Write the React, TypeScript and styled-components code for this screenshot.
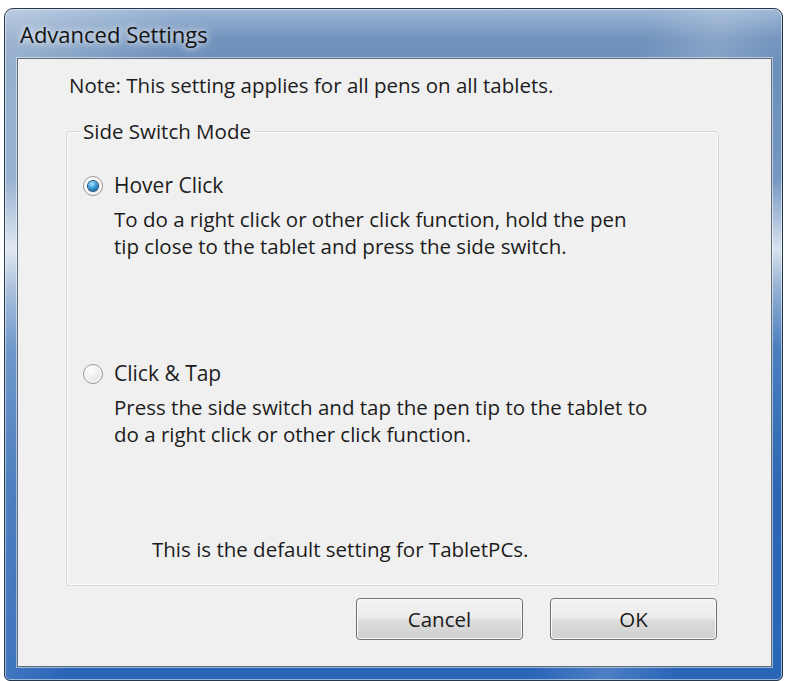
import React from "react";
import styled, { createGlobalStyle } from "styled-components";

const GlobalStyle = createGlobalStyle`
  html, body {
    margin: 0;
    padding: 0;
    background: #ffffff;
  }
  body {
    font-family: "Open Sans", "Noto Sans", sans-serif;
    color: #1c1c1c;
  }
`;

const Page = styled.div`
  width: 787px;
  height: 681px;
  padding: 8px 4px 0 4px;
  box-sizing: border-box;
  overflow: hidden;
`;

const Window = styled.div`
  display: flex;
  flex-direction: column;
  width: 779px;
  height: 673px;
  box-sizing: border-box;
  border: 1px solid #24364c;
  border-radius: 9px 9px 6px 6px;
  box-shadow: inset 0 0 0 1px rgba(255, 255, 255, 0.5);
  background:
    linear-gradient(100deg, rgba(255, 255, 255, 0.32) 0%, rgba(255, 255, 255, 0) 20%,
      rgba(255, 255, 255, 0) 72%, rgba(255, 255, 255, 0.16) 80%, rgba(255, 255, 255, 0) 88%),
    linear-gradient(180deg, #9cb6d5 0px, #7293bd 30px, #6a8fba 60px, #7597c1 170px,
      #d8e2ee 240px, #93b0d2 280px, #4a7ebe 340px, #2c66b2 480px, #2a66b8 100%);
`;

const TitleBar = styled.div`
  height: 49px;
  display: flex;
  align-items: center;
  padding-left: 15px;
  font-size: 22px;
  color: #141414;
  text-shadow: 0 0 6px rgba(255, 255, 255, 0.95), 0 0 14px rgba(255, 255, 255, 0.7);
`;

const Client = styled.div`
  flex: 1;
  display: flex;
  flex-direction: column;
  margin: 0 10px 13px 12px;
  background: #f0f0f0;
  border: 1px solid #5f6b78;
  box-shadow: 0 0 0 1px rgba(255, 255, 255, 0.5);
  padding-top: 13px;
  font-size: 20.5px;
  line-height: 27px;
`;

const Note = styled.div`
  padding-left: 51px;
`;

const Group = styled.fieldset`
  margin: 21px 52px 0 48px;
  padding: 0 0 22px 0;
  border: 1px solid #d3d8dc;
  border-radius: 4px;
  box-shadow: inset 0 0 0 1px rgba(255, 255, 255, 0.7);
`;

const Legend = styled.legend`
  margin-left: 13px;
  padding: 0 3px;
  line-height: 22px;
`;

const Option = styled.label<{ $top: number }>`
  display: flex;
  align-items: center;
  gap: 11px;
  margin-top: ${(p) => p.$top}px;
  padding-left: 16px;
  font-size: 21px;
`;

const Radio = styled.span<{ $checked?: boolean }>`
  position: relative;
  width: 18px;
  height: 18px;
  border-radius: 50%;
  border: 1px solid #9a9a9a;
  background: radial-gradient(circle at 35% 30%, #ffffff 0%, #f1f1f1 40%, #d4d4d4 100%);
  box-shadow: inset 0 0 0 2px rgba(255, 255, 255, 0.7);
  flex: none;

  &::after {
    content: "";
    position: absolute;
    left: 4px;
    top: 4px;
    width: 10px;
    height: 10px;
    border-radius: 50%;
    display: ${(p) => (p.$checked ? "block" : "none")};
    background: radial-gradient(circle at 40% 30%, #bfe6fb 0%, #5ab4e8 30%, #1672b8 70%, #0c4a86 100%);
    box-shadow: 0 0 0 1px #1a4f7c;
  }
`;

const Desc = styled.div<{ $top: number; $indent: number }>`
  margin-top: ${(p) => p.$top}px;
  padding-left: ${(p) => p.$indent}px;
  white-space: nowrap;
`;

const ButtonRow = styled.div`
  display: flex;
  justify-content: flex-end;
  gap: 27px;
  margin: 12px 54px 0 0;
`;

const Button = styled.button`
  width: 167px;
  height: 42px;
  border: 1px solid #707070;
  border-radius: 4px;
  box-shadow: inset 0 0 0 1px #fbfbfb;
  background: linear-gradient(180deg, #f3f3f3 0%, #ebebeb 48%, #dddddd 52%, #d0d0d0 100%);
  font-family: "Open Sans", "Noto Sans", sans-serif;
  font-size: 20.5px;
  color: #1c1c1c;
  padding: 0;
`;

export default function App() {
  return (
    <>
      <GlobalStyle />
      <Page>
        <Window>
          <TitleBar>Advanced Settings</TitleBar>
          <Client>
            <Note>Note: This setting applies for all pens on all tablets.</Note>
            <Group>
              <Legend>Side Switch Mode</Legend>
              <Option $top={30}>
                <Radio $checked />
                Hover Click
              </Option>
              <Desc $top={7} $indent={47}>
                To do a right click or other click function, hold the pen
                <br />
                tip close to the tablet and press the side switch.
              </Desc>
              <Option $top={100}>
                <Radio />
                Click &amp; Tap
              </Option>
              <Desc $top={7} $indent={47}>
                Press the side switch and tap the pen tip to the tablet to
                <br />
                do a right click or other click function.
              </Desc>
              <Desc $top={88} $indent={85}>
                This is the default setting for TabletPCs.
              </Desc>
            </Group>
            <ButtonRow>
              <Button>Cancel</Button>
              <Button>OK</Button>
            </ButtonRow>
          </Client>
        </Window>
      </Page>
    </>
  );
}
